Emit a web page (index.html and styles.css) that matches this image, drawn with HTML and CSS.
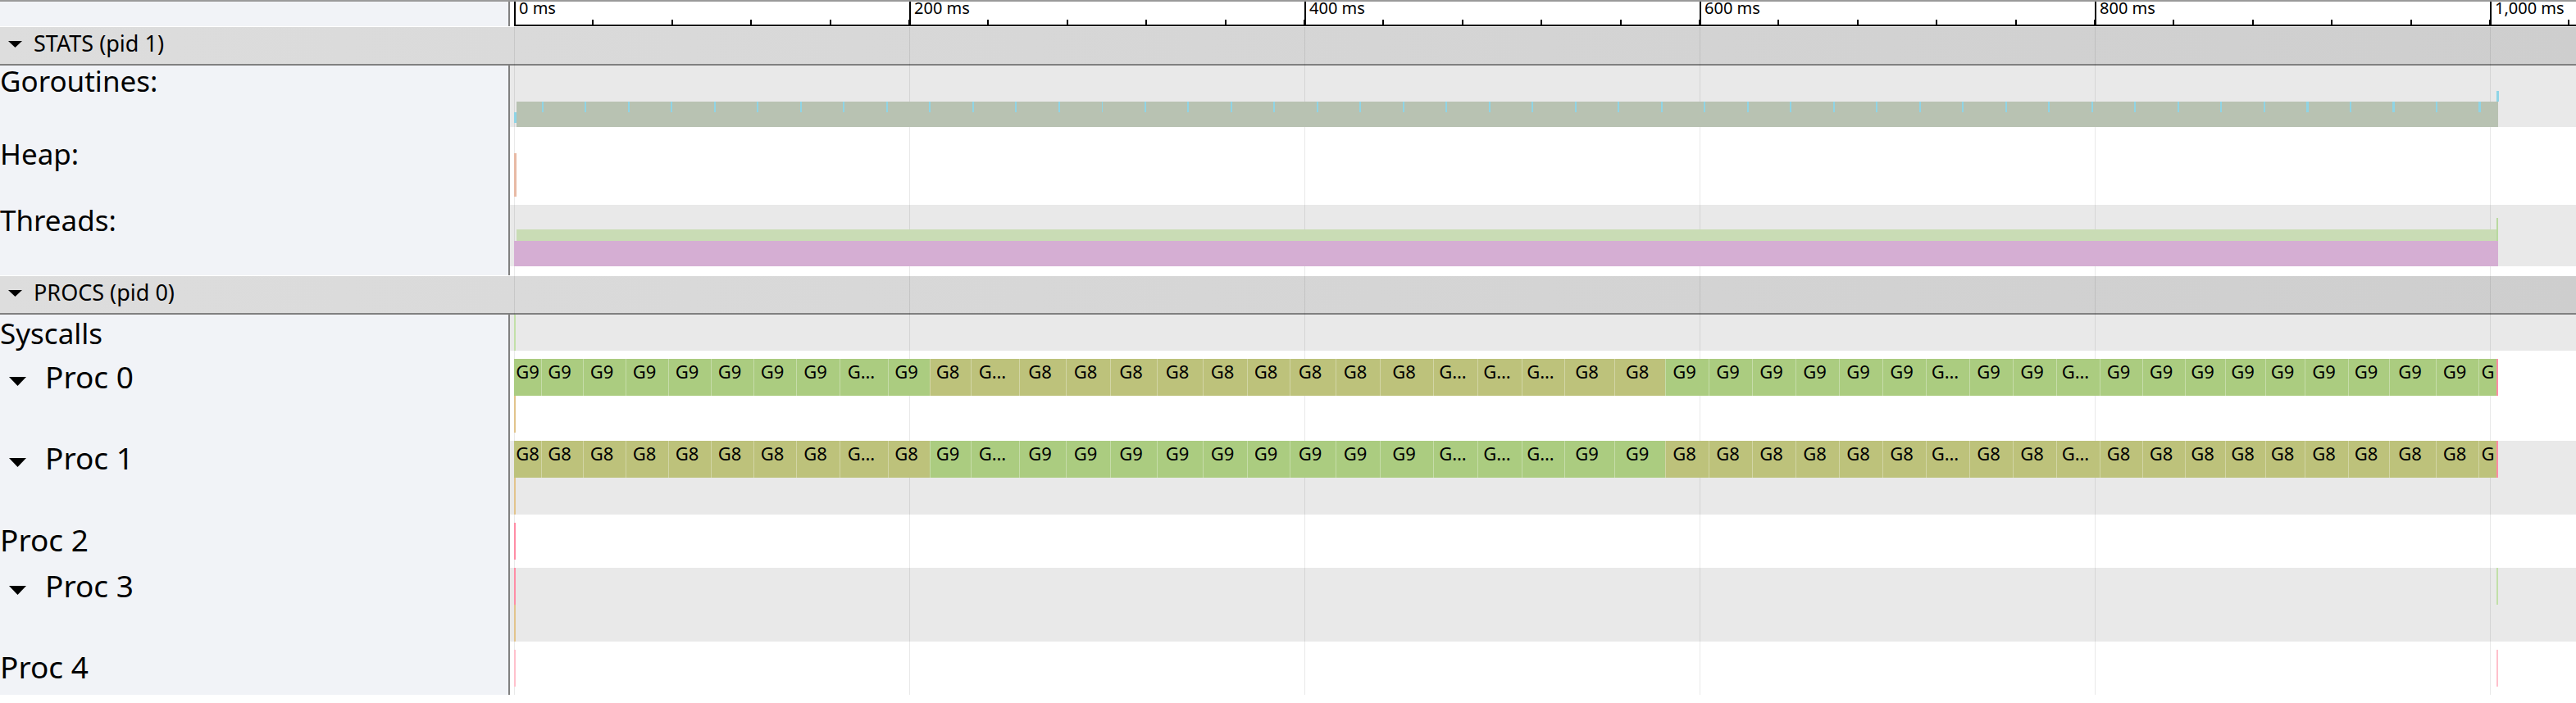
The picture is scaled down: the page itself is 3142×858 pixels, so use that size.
FILE: index.html
```html
<!DOCTYPE html>
<html>
<head>
<meta charset="utf-8">
<title>Trace viewer</title>
<link rel="stylesheet" href="styles.css">
</head>
<body>
<div class="ruler-row">
  <div class="ruler-spacer"></div>
  <div class="ruler">
    <div class="ruler-axis">
      <div class="tick-seg"><span class="tick-label">0 ms</span></div>
      <div class="tick-seg"><span class="tick-label">200 ms</span></div>
      <div class="tick-seg"><span class="tick-label">400 ms</span></div>
      <div class="tick-seg"><span class="tick-label">600 ms</span></div>
      <div class="tick-seg"><span class="tick-label">800 ms</span></div>
      <div class="tick-seg last"><span class="tick-label">1,000 ms</span></div>
    </div>
  </div>
</div>

<div class="timeline">
  <div class="grid"></div>

  <div class="heading"><svg class="htri" width="17" height="8" viewBox="0 0 17 8"><path d="M0 0H17L8.5 8Z"/></svg><span>STATS (pid 1)</span></div>

  <div class="row h75 gray">
    <div class="label p1"><span>Goroutines:</span></div>
    <div class="track gor">
      <div class="cyan-start"></div>
      <div class="gor-bar"></div>
      <div class="cyan-end"></div>
    </div>
  </div>
  <div class="row h95">
    <div class="label p15"><span>Heap:</span></div>
    <div class="track"><div class="heap-tick"></div></div>
  </div>
  <div class="row h75 gray">
    <div class="label p1"><span>Threads:</span></div>
    <div class="track">
      <div class="thr-top">
        <div class="thr-green"></div>
        <div class="thr-spike"></div>
      </div>
      <div class="thr-purple"></div>
    </div>
  </div>
  <div class="row h11">
    <div class="label"></div>
    <div class="track"></div>
  </div>

  <div class="heading"><svg class="htri" width="17" height="8" viewBox="0 0 17 8"><path d="M0 0H17L8.5 8Z"/></svg><span>PROCS (pid 0)</span></div>

  <div class="row h44 gray">
    <div class="label p5"><span>Syscalls</span></div>
    <div class="track"><div class="mark full green"></div></div>
  </div>

  <div class="row h110">
    <div class="label proc p13"><svg class="tri" width="21" height="11" viewBox="0 0 21 11"><path d="M0 0H21L10.5 11Z"/></svg><span>Proc 0</span></div>
    <div class="track pt10">
      <div class="slices">
        <div class="sl g9 first" style="width:33px">G9</div>
        <div class="sl g9" style="width:51px">G9</div>
        <div class="sl g9" style="width:52px">G9</div>
        <div class="sl g9" style="width:52px">G9</div>
        <div class="sl g9" style="width:52px">G9</div>
        <div class="sl g9" style="width:52px">G9</div>
        <div class="sl g9" style="width:52px">G9</div>
        <div class="sl g9" style="width:53px">G9</div>
        <div class="sl g9" style="width:59px">G…</div>
        <div class="sl g9" style="width:51px">G9</div>
        <div class="sl g8" style="width:50px">G8</div>
        <div class="sl g8" style="width:59px">G…</div>
        <div class="sl g8" style="width:57px">G8</div>
        <div class="sl g8" style="width:54px">G8</div>
        <div class="sl g8" style="width:57px">G8</div>
        <div class="sl g8" style="width:56px">G8</div>
        <div class="sl g8" style="width:54px">G8</div>
        <div class="sl g8" style="width:52px">G8</div>
        <div class="sl g8" style="width:56px">G8</div>
        <div class="sl g8" style="width:54px">G8</div>
        <div class="sl g8" style="width:65px">G8</div>
        <div class="sl g8" style="width:54px">G…</div>
        <div class="sl g8" style="width:54px">G…</div>
        <div class="sl g8" style="width:52px">G…</div>
        <div class="sl g8" style="width:61px">G8</div>
        <div class="sl g8" style="width:62px">G8</div>
        <div class="sl g9" style="width:53px">G9</div>
        <div class="sl g9" style="width:53px">G9</div>
        <div class="sl g9" style="width:53px">G9</div>
        <div class="sl g9" style="width:53px">G9</div>
        <div class="sl g9" style="width:53px">G9</div>
        <div class="sl g9" style="width:53px">G9</div>
        <div class="sl g9" style="width:53px">G…</div>
        <div class="sl g9" style="width:53px">G9</div>
        <div class="sl g9" style="width:53px">G9</div>
        <div class="sl g9" style="width:53px">G…</div>
        <div class="sl g9" style="width:52px">G9</div>
        <div class="sl g9" style="width:52px">G9</div>
        <div class="sl g9" style="width:49px">G9</div>
        <div class="sl g9" style="width:49px">G9</div>
        <div class="sl g9" style="width:48px">G9</div>
        <div class="sl g9" style="width:53px">G9</div>
        <div class="sl g9" style="width:50px">G9</div>
        <div class="sl g9" style="width:57px">G9</div>
        <div class="sl g9" style="width:52px">G9</div>
        <div class="sl g9 tail-sl" style="width:22px">G</div>
        <div class="end-mark pink"></div>
      </div>
      <div class="subrow"><div class="mark tan"></div></div>
    </div>
  </div>

  <div class="row h90 gray">
    <div class="label proc p2"><svg class="tri" width="21" height="11" viewBox="0 0 21 11"><path d="M0 0H21L10.5 11Z"/></svg><span>Proc 1</span></div>
    <div class="track">
      <div class="slices">
        <div class="sl g8 first" style="width:33px">G8</div>
        <div class="sl g8" style="width:51px">G8</div>
        <div class="sl g8" style="width:52px">G8</div>
        <div class="sl g8" style="width:52px">G8</div>
        <div class="sl g8" style="width:52px">G8</div>
        <div class="sl g8" style="width:52px">G8</div>
        <div class="sl g8" style="width:52px">G8</div>
        <div class="sl g8" style="width:53px">G8</div>
        <div class="sl g8" style="width:59px">G…</div>
        <div class="sl g8" style="width:51px">G8</div>
        <div class="sl g9" style="width:50px">G9</div>
        <div class="sl g9" style="width:59px">G…</div>
        <div class="sl g9" style="width:57px">G9</div>
        <div class="sl g9" style="width:54px">G9</div>
        <div class="sl g9" style="width:57px">G9</div>
        <div class="sl g9" style="width:56px">G9</div>
        <div class="sl g9" style="width:54px">G9</div>
        <div class="sl g9" style="width:52px">G9</div>
        <div class="sl g9" style="width:56px">G9</div>
        <div class="sl g9" style="width:54px">G9</div>
        <div class="sl g9" style="width:65px">G9</div>
        <div class="sl g9" style="width:54px">G…</div>
        <div class="sl g9" style="width:54px">G…</div>
        <div class="sl g9" style="width:52px">G…</div>
        <div class="sl g9" style="width:61px">G9</div>
        <div class="sl g9" style="width:62px">G9</div>
        <div class="sl g8" style="width:53px">G8</div>
        <div class="sl g8" style="width:53px">G8</div>
        <div class="sl g8" style="width:53px">G8</div>
        <div class="sl g8" style="width:53px">G8</div>
        <div class="sl g8" style="width:53px">G8</div>
        <div class="sl g8" style="width:53px">G8</div>
        <div class="sl g8" style="width:53px">G…</div>
        <div class="sl g8" style="width:53px">G8</div>
        <div class="sl g8" style="width:53px">G8</div>
        <div class="sl g8" style="width:53px">G…</div>
        <div class="sl g8" style="width:52px">G8</div>
        <div class="sl g8" style="width:52px">G8</div>
        <div class="sl g8" style="width:49px">G8</div>
        <div class="sl g8" style="width:49px">G8</div>
        <div class="sl g8" style="width:48px">G8</div>
        <div class="sl g8" style="width:53px">G8</div>
        <div class="sl g8" style="width:50px">G8</div>
        <div class="sl g8" style="width:57px">G8</div>
        <div class="sl g8" style="width:52px">G8</div>
        <div class="sl g8 tail-sl" style="width:22px">G</div>
        <div class="end-mark pink"></div>
      </div>
      <div class="subrow"><div class="mark tan"></div></div>
    </div>
  </div>

  <div class="row h65">
    <div class="label proc p12"><span>Proc 2</span></div>
    <div class="track pt10">
      <div class="subrow"><div class="mark pink"></div></div>
    </div>
  </div>

  <div class="row h90 gray">
    <div class="label proc p3"><svg class="tri" width="21" height="11" viewBox="0 0 21 11"><path d="M0 0H21L10.5 11Z"/></svg><span>Proc 3</span></div>
    <div class="track">
      <div class="subrow"><div class="mark pink"></div><div class="mark green tail"></div></div>
      <div class="subrow"><div class="mark tan"></div></div>
    </div>
  </div>

  <div class="row h65">
    <div class="label proc p12"><span>Proc 4</span></div>
    <div class="track pt10">
      <div class="subrow"><div class="mark lightpink"></div><div class="mark lightpink tail"></div></div>
    </div>
  </div>
</div>
</body>
</html>
```

FILE: styles.css
```css
* { box-sizing: border-box; }
html, body { margin: 0; padding: 0; background: #fff; }
body {
  width: 3142px;
  height: 858px;
  overflow: hidden;
  font-family: "Noto Sans", "Open Sans", sans-serif;
  color: #000;
}

/* ruler */
.ruler-row { display: flex; height: 32px; border-top: 2px solid #9a9a9a; }
.ruler-spacer { width: 622px; flex: none; background: #f1f3f7; border-right: 2px solid #808080; }
.ruler { flex: 1; padding-left: 5px; background: #fff; min-width: 0; }
.ruler-axis { display: flex; height: 30px; border-bottom: 2px solid #000; }
.tick-seg {
  flex: none;
  width: 482px;
  height: 28px;
  border-left: 2px solid #000;
  padding-left: 4px;
  background: repeating-linear-gradient(90deg, transparent 0 93.4px, #000 93.4px 95.4px, transparent 95.4px 96.4px) left bottom / 100% 6px no-repeat;
}
.tick-seg.last { width: 103px; }
.tick-label {
  display: block;
  margin-top: -2px;
  font-size: 20px;
  line-height: 20px;
  white-space: nowrap;
}

/* timeline body */
.timeline { position: relative; }
.grid {
  position: absolute;
  top: 0; bottom: 0; left: 627px; right: 0;
  background: repeating-linear-gradient(90deg, rgba(0,0,0,0.085) 0 1px, transparent 1px 482px);
  z-index: 1;
  pointer-events: none;
}
.heading {
  margin-top: 1px;
  height: 47px;
  border-bottom: 2px solid #808080;
  background: linear-gradient(90deg, #dddddd, #cecece);
  display: flex;
  align-items: flex-start;
  padding: 6px 0 0 10px;
  font-size: 27px;
  line-height: 27px;
  white-space: nowrap;
}
.htri { flex: none; margin-top: 11px; margin-right: 14px; fill: #000; }

.row { display: flex; }
.h11 { height: 11px; }
.h44 { height: 44px; }
.h65 { height: 65px; }
.h75 { height: 75px; }
.h90 { height: 90px; }
.h95 { height: 95px; }
.h110 { height: 110px; }

.label {
  width: 622px;
  flex: none;
  background: #f1f3f7;
  border-right: 2px solid #808080;
  font-size: 35px;
  line-height: 35px;
  white-space: nowrap;
  display: flex;
  align-items: flex-start;
}
.label.proc { font-size: 37px; line-height: 37px; }
.p1 { padding-top: 1px; }
.p2 { padding-top: 2px; }
.p3 { padding-top: 3px; }
.p5 { padding-top: 5px; }
.p12 { padding-top: 12px; }
.p13 { padding-top: 13px; }
.p15 { padding-top: 15px; }
.tri { flex: none; margin: 19px 23px 0 11px; fill: #000; }

.track { flex: 1; padding-left: 5px; min-width: 0; }
.gray .track { background: #e9e9e9; }
.pt10 { padding-top: 10px; }

/* counters */
.gor { display: flex; align-items: flex-end; }
.cyan-start { flex: none; width: 3px; height: 13px; margin-bottom: 5px; background: #8fd4e6; position: relative; z-index: 2; }
.gor-bar {
  flex: none;
  width: 2417px;
  height: 31px;
  position: relative;
  z-index: 2;
  background: repeating-linear-gradient(90deg, transparent 0 31px, #8fd4e6 31px 33px, transparent 33px 52.5px) left top / 100% 13px no-repeat, #b8c2b2;
}
.cyan-end { flex: none; align-self: flex-start; width: 3px; height: 13px; margin-top: 31px; margin-left: -2px; background: #8fd4e6; position: relative; z-index: 2; }
.heap-tick { width: 3px; height: 53px; margin-top: 32px; background: #e8baa5; position: relative; z-index: 2; }
.thr-top { display: flex; align-items: flex-end; height: 28px; margin-top: 16px; }
.thr-green { flex: none; width: 2415px; height: 14px; margin-left: 3px; background: #c9dcb5; position: relative; z-index: 2; }
.thr-spike { flex: none; width: 2px; height: 28px; background: #b9d9a0; position: relative; z-index: 2; }
.thr-purple { width: 2420px; height: 31px; background: #d5aed3; position: relative; z-index: 2; }

/* slices */
.slices { display: flex; height: 45px; position: relative; z-index: 2; }
.sl {
  flex: none;
  height: 45px;
  font-size: 22px;
  line-height: 22px;
  padding-top: 4px;
  padding-right: 7px;
  text-align: center;
  white-space: nowrap;
  overflow: hidden;
  border-left: 1px solid rgba(255,255,255,0.32);
  color: #000;
}
.sl.first { border-left: none; padding-right: 0; }
.sl.tail-sl { padding-right: 0; }
.g9 { background: #abcc80; }
.g8 { background: #bdc27b; }
.end-mark { flex: none; width: 2px; height: 45px; }

.subrow { display: flex; height: 45px; }
.mark { flex: none; width: 2px; height: 45px; position: relative; z-index: 2; }
.mark.full { height: 100%; }
.mark.tail { margin-left: 2416px; }
.pink { background: #ff8da5; }
.lightpink { background: #ffc0cc; }
.tan { background: #e2c48c; }
.green { background: #c2e0a8; }
```
